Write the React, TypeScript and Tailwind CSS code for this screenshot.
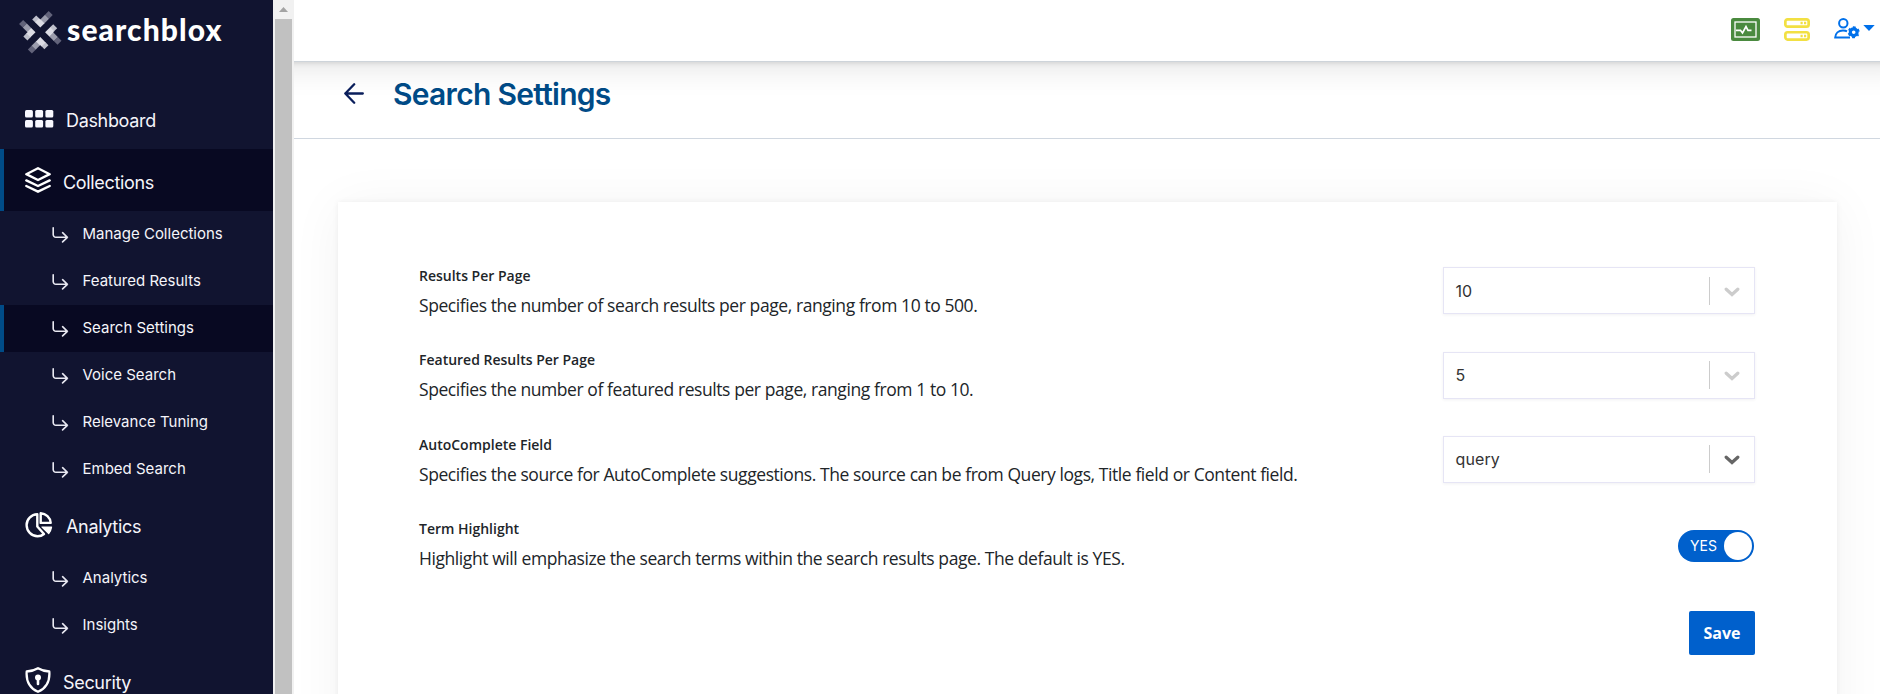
import type { ReactNode } from "react";

function Logo() {
  return (
    <div className="flex h-[87px] shrink-0 items-start pl-[19px] pt-[10px]">
      <svg className="shrink-0" width="44" height="45" viewBox="0 0 44 45" fill="none" strokeWidth="5.700">
        {[0, 90, 180, 270].map((angle) => (
          <g key={angle} transform={`rotate(${angle} 21.300 22.300)`}>
            <path d="M28 6.800 L31.700 3.100" stroke="#62637a" />
            <path d="M23.300 11.500 L28 6.800" stroke="#9b9cac" />
            <path d="M15.200 7.400 L18.300 10.500" stroke="#bfc0cb" />
            <path d="M18 10.200 L21.300 13.500 L23.600 11.200" stroke="#dcdce4" />
          </g>
        ))}
      </svg>
      <span className="ml-[4px] mt-[1px] font-['Lato'] text-[30px] font-black leading-[36px] tracking-[1.100px] text-white">
        searchblox
      </span>
    </div>
  );
}

function GridIcon() {
  return (
    <svg width="29" height="18" viewBox="0 0 29 18" fill="#f8f8ff">
      {[0, 10.2, 20.4].map((x) =>
        [0, 10].map((y) => <rect key={`${x}-${y}`} x={x} y={y} width="7.900" height="7.600" rx="1.500" />)
      )}
    </svg>
  );
}

function StackIcon() {
  return (
    <svg width="26" height="26" viewBox="0 0 26 26" fill="none" stroke="white" strokeWidth="2.400" strokeLinecap="round" strokeLinejoin="round">
      <path d="M13 1.200 L24.700 7.200 L13 13 L1.300 7.200 Z" />
      <path d="M1.300 13.400 L13 19 L24.700 13.400" />
      <path d="M1.300 19 L13 24.700 L24.700 19" />
    </svg>
  );
}

function ShieldIcon() {
  return (
    <svg width="26" height="26" viewBox="0 0 26 26" fill="none" stroke="white" strokeWidth="2.300" strokeLinejoin="round">
      <path d="M13 1.200 C16.500 3.300 20 4.200 24.300 4.500 C25 13.500 21.500 21 13 24.800 C4.500 21 1 13.500 1.700 4.500 C6 4.200 9.500 3.300 13 1.200 Z" />
      <circle cx="13" cy="10.600" r="3" fill="white" stroke="none" />
      <path d="M13 11 V17" strokeWidth="2.600" strokeLinecap="round" />
    </svg>
  );
}

function PieIcon() {
  return (
    <svg width="28" height="26" viewBox="0 0 28 26" fill="none" stroke="white" strokeWidth="2.400" strokeLinejoin="round">
      <path d="M12.300 2.300 C6.200 2.600 1.600 7.200 1.600 13 C1.600 19 6.400 24.300 12.600 24.300 C15.200 24.300 17.200 23.500 19 22 L12.300 14.500 Z" />
      <path d="M15.700 1.300 C20.900 1.600 25.300 5.600 25.700 10.900 L15.700 10.900 Z" />
      <path d="M17 15 L26.600 15 C26.300 17.400 25.300 19.600 23.700 21.500 Z" fill="white" strokeWidth="1.200" />
    </svg>
  );
}

function SubArrow() {
  return (
    <svg width="17" height="16" viewBox="0 0 17 16" fill="none" stroke="#e9e9f2" strokeWidth="1.600" strokeLinecap="round" strokeLinejoin="round">
      <path d="M1.200 0.800 V7.500 A2.700 2.700 0 0 0 3.900 10.300 H15.400 M10.600 5.700 L15.400 10.300 L10.600 14.900" />
    </svg>
  );
}

function NavGroup({ icon, label, active, wide }: { icon: ReactNode; label: string; active?: boolean; wide?: boolean }) {
  return (
    <div className={`flex h-[62px] shrink-0 items-center border-l-4 ${active ? "border-[#004b87] bg-[#080922]" : "border-transparent"}`}>
      <div className={`flex h-[30px] items-center pl-[21px] ${wide ? "w-[62px] pt-[2px]" : "w-[59px]"}`}>{icon}</div>
      <span className="pt-[6px] text-[18px] leading-6 tracking-[-0.330px] text-[#f5f5fa]">{label}</span>
    </div>
  );
}

function NavItem({ label, active }: { label: string; active?: boolean }) {
  return (
    <div className={`flex h-[47px] shrink-0 items-center border-l-4 pb-[2px] pl-12 ${active ? "border-[#004b87] bg-[#080922]" : "border-transparent"}`}>
      <span className="pt-[2px]"><SubArrow /></span>
      <span className="ml-[13.500px] text-[15px] leading-5 text-[#f5f5fa]">{label}</span>
    </div>
  );
}

function Sidebar() {
  return (
    <nav className="relative z-20 flex w-[273px] shrink-0 flex-col overflow-hidden bg-[#111430]">
      <Logo />
      <NavGroup icon={<GridIcon />} label="Dashboard" wide />
      <NavGroup icon={<StackIcon />} label="Collections" active />
      <NavItem label="Manage Collections" />
      <NavItem label="Featured Results" />
      <NavItem label="Search Settings" active />
      <NavItem label="Voice Search" />
      <NavItem label="Relevance Tuning" />
      <NavItem label="Embed Search" />
      <NavGroup icon={<PieIcon />} label="Analytics" wide />
      <NavItem label="Analytics" />
      <NavItem label="Insights" />
      <NavGroup icon={<ShieldIcon />} label="Security" />
    </nav>
  );
}

function Scrollbar() {
  return (
    <div className="relative z-20 flex w-[21px] shrink-0 flex-col bg-[#f1f1f1] pl-[2px] pr-[2px]">
      <div className="flex h-[19px] shrink-0 justify-center pt-[7px]">
        <svg width="9" height="5" viewBox="0 0 9 5" fill="#a3a3a3">
          <path d="M4.500 0 L9 5 H0 Z" />
        </svg>
      </div>
      <div className="flex-1 bg-[#c1c1c1]" />
    </div>
  );
}

function TopBar() {
  return (
    <header className="relative z-10 flex h-[62px] shrink-0 items-start justify-end border-b border-[#ced4da] bg-white pr-[5px] shadow-[0_-4px_5px_5px_rgba(0,0,0,0.12),0_-26px_30px_30px_rgba(0,0,0,0.12)]">
      <svg className="mt-[18px]" width="29" height="23" viewBox="0 0 29 23" fill="none">
        <rect width="29" height="23" rx="2.500" fill="#4a8a3f" />
        <rect x="4" y="4" width="21" height="15" stroke="white" strokeWidth="1.300" />
        <path d="M5 12.300 H9.500 L11.500 15 L15 8.500 L17 12.300 H20.500" stroke="white" strokeWidth="1.700" />
      </svg>
      <svg className="ml-[24px] mt-[18px]" width="26" height="23" viewBox="0 0 26 23" fill="none" stroke="#f2e043" strokeWidth="2.700">
        <rect x="1.350" y="1.350" width="23.300" height="7.300" rx="2.200" />
        <rect x="1.350" y="14.250" width="23.300" height="7.300" rx="2.200" />
        <path d="M16.500 5 H18.700 M20 5 H22.200 M16.500 18 H18.700 M20 18 H22.200" />
      </svg>
      <svg className="ml-[24px] mt-[18px]" width="26" height="22" viewBox="0 0 26 22" fill="none" stroke="#0070ea" strokeWidth="2">
        <circle cx="9.300" cy="5.200" r="4.200" />
        <path d="M13 13.300 C12 12.700 10.800 12.500 9 12.500 C4.500 12.500 1.300 15.200 1.200 19.600 H16" />
        <circle cx="19.700" cy="14.200" r="3.400" strokeWidth="3.200" />
        <circle cx="19.700" cy="14.200" r="5" strokeWidth="2" strokeDasharray="2.620 2.620" strokeDashoffset="1.310" transform="rotate(30 19.700 14.200)" />
      </svg>
      <svg className="ml-[3px] mt-[25px]" width="12" height="6" viewBox="0 0 12 6" fill="#0070ea">
        <path d="M0.300 0 H11.700 L6 6 Z" />
      </svg>
    </header>
  );
}

function TitleBar() {
  return (
    <div className="flex h-[77px] shrink-0 items-center border-b border-[#d0d7e0] pb-[13px] pl-[50px]">
      <svg className="-mt-px" width="20" height="21" viewBox="0 0 20 21" fill="none" stroke="#0b1f5c" strokeWidth="2.300" strokeLinecap="round" strokeLinejoin="round">
        <path d="M18.800 10.500 H1.300 M10.200 1.300 L1.300 10.500 L10.200 19.700" />
      </svg>
      <h1 className="ml-[29px] text-[30px] font-semibold leading-9 tracking-[-0.720px] text-[#004b87]">Search Settings</h1>
    </div>
  );
}

function Select({ value, muted }: { value: string; muted?: boolean }) {
  return (
    <div className="flex h-[47px] w-[312px] items-center border border-[#e6e5f5] bg-white shadow-[0_1px_3px_rgba(0,0,50,0.06)]">
      <span className="flex-1 pl-[11.500px] text-[16px] leading-5 tracking-[0.100px] text-[#333]">{value}</span>
      <span className="h-[28px] w-px bg-[#ccc]" />
      <span className={`flex w-[44px] justify-center pt-[2px] ${muted ? "text-[#ccc]" : "text-[#666]"}`}>
        <svg width="16" height="10" viewBox="0 0 16 10" fill="none" stroke="currentColor" strokeWidth="3.200" strokeLinecap="round">
          <path d="M2.200 2.200 L8 7.500 L13.800 2.200" />
        </svg>
      </span>
    </div>
  );
}

function SettingRow({ title, text, children }: { title: string; text: string; children: ReactNode }) {
  return (
    <div className="flex h-[84.400px] shrink-0 items-start justify-between">
      <div className="font-['Open_Sans'] text-[#212529]">
        <div className="text-[14px] font-semibold leading-[20px]">{title}</div>
        <div className="mt-[7px] text-[17.500px] leading-[24px] tracking-[-0.420px]">{text}</div>
      </div>
      {children}
    </div>
  );
}

export default function App() {
  return (
    <div className="flex h-[694px] w-[1880px] overflow-hidden bg-white font-['Inter',sans-serif]">
      <Sidebar />
      <Scrollbar />
      <div className="flex flex-1 flex-col">
        <TopBar />
        <TitleBar />
        <main className="flex flex-1 flex-col overflow-hidden pl-[44px] pr-[43px] pt-[63px]">
          <section className="flex h-[560px] shrink-0 flex-col bg-white pl-[81px] pr-[82px] pt-[64px] shadow-[0_4px_50px_rgba(0,0,0,0.05),0_0_6px_rgba(0,0,0,0.06)]">
            <SettingRow title="Results Per Page" text="Specifies the number of search results per page, ranging from 10 to 500.">
              <div className="pt-[1px]"><Select value="10" muted /></div>
            </SettingRow>
            <SettingRow title="Featured Results Per Page" text="Specifies the number of featured results per page, ranging from 1 to 10.">
              <div className="pt-[1.300px]"><Select value="5" muted /></div>
            </SettingRow>
            <SettingRow title="AutoComplete Field" text="Specifies the source for AutoComplete suggestions. The source can be from Query logs, Title field or Content field.">
              <div className="pt-[1px]"><Select value="query" /></div>
            </SettingRow>
            <SettingRow title="Term Highlight" text="Highlight will emphasize the search terms within the search results page. The default is YES.">
              <div className="mr-[1px] mt-[11px] flex h-8 w-[76px] items-center justify-between rounded-full bg-[#0060cc] pl-[12px] pr-[2px]">
                <span className="text-[14px] leading-5 text-white">YES</span>
                <span className="size-7 rounded-full bg-white" />
              </div>
            </SettingRow>
            <button className="mt-[7px] h-[44px] w-[66px] self-end rounded-[2px] bg-[#0060cc] font-['Open_Sans'] text-[16px] font-bold text-white">
              Save
            </button>
          </section>
        </main>
      </div>
    </div>
  );
}
